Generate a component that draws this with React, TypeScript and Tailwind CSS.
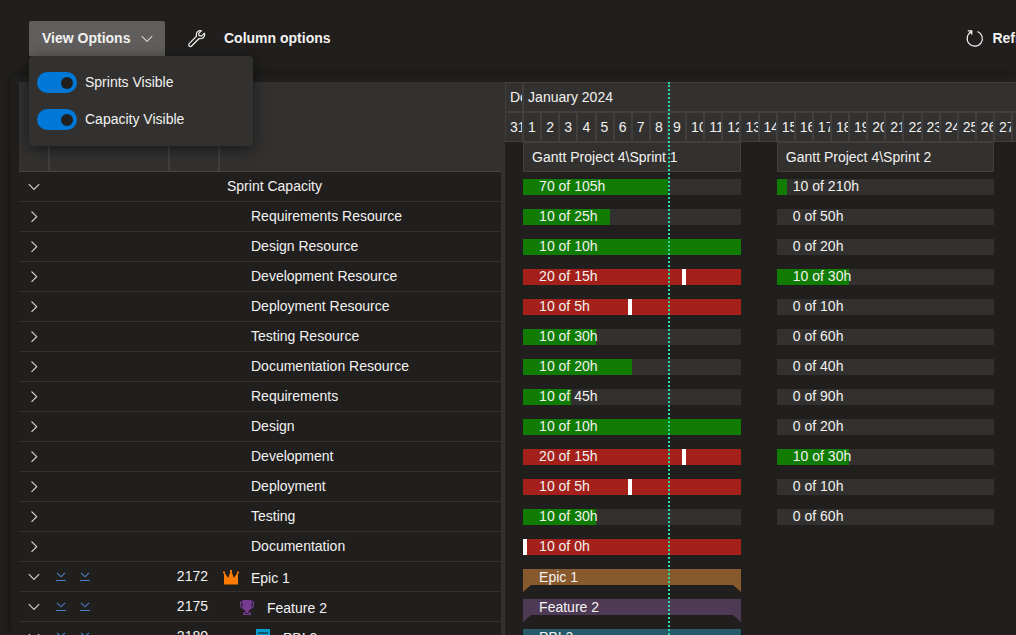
import { useState } from "react";

const DAY = 18.12;
const days = [31, ...Array.from({ length: 28 }, (_, i) => i + 1)];

type Capacity = { used: number; total: number };
type Row = {
  name: string;
  open?: boolean;
  indent: "root" | "resource";
  first: Capacity;
  second?: Capacity;
};

const rows: Row[] = [
  { name: "Sprint Capacity", open: true, indent: "root", first: { used: 70, total: 105 }, second: { used: 10, total: 210 } },
  { name: "Requirements Resource", indent: "resource", first: { used: 10, total: 25 }, second: { used: 0, total: 50 } },
  { name: "Design Resource", indent: "resource", first: { used: 10, total: 10 }, second: { used: 0, total: 20 } },
  { name: "Development Resource", indent: "resource", first: { used: 20, total: 15 }, second: { used: 10, total: 30 } },
  { name: "Deployment Resource", indent: "resource", first: { used: 10, total: 5 }, second: { used: 0, total: 10 } },
  { name: "Testing Resource", indent: "resource", first: { used: 10, total: 30 }, second: { used: 0, total: 60 } },
  { name: "Documentation Resource", indent: "resource", first: { used: 10, total: 20 }, second: { used: 0, total: 40 } },
  { name: "Requirements", indent: "resource", first: { used: 10, total: 45 }, second: { used: 0, total: 90 } },
  { name: "Design", indent: "resource", first: { used: 10, total: 10 }, second: { used: 0, total: 20 } },
  { name: "Development", indent: "resource", first: { used: 20, total: 15 }, second: { used: 10, total: 30 } },
  { name: "Deployment", indent: "resource", first: { used: 10, total: 5 }, second: { used: 0, total: 10 } },
  { name: "Testing", indent: "resource", first: { used: 10, total: 30 }, second: { used: 0, total: 60 } },
  { name: "Documentation", indent: "resource", first: { used: 10, total: 0 } },
];

const items = [
  { id: 2172, name: "Epic 1", icon: <Crown />, pad: "pl-1", bar: "bg-[#87592d]", fill: "fill-[#87592d]" },
  { id: 2175, name: "Feature 2", icon: <Trophy />, pad: "pl-5", bar: "bg-[#4f3a55]", fill: "fill-[#4f3a55]" },
  { id: 2180, name: "PBI 3", icon: <Backlog />, pad: "pl-9", bar: "bg-[#25596b]", fill: "fill-[#25596b]" },
];

function Chevron({ open }: { open?: boolean }) {
  return (
    <svg viewBox="0 0 12 12" className="size-3 fill-none stroke-[#d0cfcd]" strokeWidth="1.2">
      <path d={open ? "M.8 3.2 6 8.4l5.2-5.2" : "M3.500.5l5.200 5.200-5.200 5.200"} />
    </svg>
  );
}

function ExpandAll() {
  return (
    <svg viewBox="0 0 10 10" className="size-[10px] fill-none stroke-[#4a7fc4]" strokeWidth="1.1">
      <path d="M1 .8l4 4 4-4M0 8.500h10" />
    </svg>
  );
}

function Crown() {
  return (
    <svg viewBox="0 0 16 16" className="size-4 fill-[#ff7b00]">
      <path d="M1 14.500V3.500h1.200L5 8 7.400 2h1.200L11 8l2.800-4.500H15v11z" />
      <path d="M0 1.500h2v2H0zM7 0h2v2H7zM14 1.500h2v2h-2z" />
    </svg>
  );
}

function Trophy() {
  return (
    <svg viewBox="0 0 16 16" className="size-4 fill-[#773b93]">
      <path
        fillRule="evenodd"
        d="M3.500 0h9v1.500H15V5c0 2.200-1.300 3.600-3.300 4-.6 1-1.400 1.500-2.200 1.700V12.500H12V15H4v-2.500h2.500v-1.800C5.700 10.500 4.900 10 4.300 9 2.300 8.600 1 7.200 1 5V1.500h2.500zM3.500 2.700H2.200V5c0 1.200.4 2 1.300 2.400zM12.500 2.700v4.700c.9-.4 1.300-1.200 1.300-2.400V2.700zM5.500 13.300v.8h5v-.8z"
      />
    </svg>
  );
}

function Backlog() {
  return (
    <svg viewBox="0 0 16 16" className="size-4 overflow-visible">
      <path className="fill-[#009ccc]" d="M1-1h14v16H1z" />
      <path className="fill-[#12566b]" d="M3 2h10v2H3zM3 7h6v2H3z" />
    </svg>
  );
}

function Wrench() {
  return (
    <svg viewBox="0 0 18 18" className="size-[18px] fill-none stroke-[#f3f2f1]" strokeWidth="1.2" strokeLinejoin="round">
      <path d="M13.500.9C11.200 0 8.400 1.600 8.300 4.400c0 .7.1 1.200.3 1.700L1.200 13.600c-.7.700-.7 1.800 0 2.400.7.700 1.700.7 2.400 0l7.500-7.500c2.700.9 5.500-.9 5.600-3.700 0-.6-.1-1.100-.3-1.600l-2.900 2.900-2.400-.4-.5-2.300z" />
    </svg>
  );
}

function Refresh() {
  return (
    <svg viewBox="0 0 18 18" className="size-[18px] fill-none stroke-[#f3f2f1]" strokeWidth="1.2">
      <path d="M11.500 1.500A7.600 7.600 0 1 1 5.200 1.900M1.800.8H5.800V4.800" />
    </svg>
  );
}

function Toggle({ label }: { label: string }) {
  const [on, setOn] = useState(true);
  return (
    <label className="flex h-[21px] items-start gap-2 leading-5">
      <input
        type="checkbox"
        role="switch"
        checked={on}
        onChange={() => setOn(!on)}
        className="flex h-[21px] w-10 appearance-none items-center justify-start rounded-full bg-[#605e5c] px-1 before:size-3 before:rounded-full before:bg-[#201f1e] checked:justify-end checked:bg-[#0078d7]"
      />
      {label}
    </label>
  );
}

function CapacityBar({ used, total }: Capacity) {
  const over = used > total;
  const percent = over ? (total / used) * 100 : (used / total) * 100;
  return (
    <div className="relative h-4 bg-[#323130]">
      <div
        className={over ? "h-4 bg-[#a4201a]" : "h-4 bg-[#107c04]"}
        style={{ width: over ? "100%" : `${percent}%` }}
      />
      {over && (
        <div className="absolute inset-y-0 flex min-w-1 justify-end" style={{ width: `${percent}%` }}>
          <span className="w-1 bg-white" />
        </div>
      )}
      <span className="absolute top-0 left-4 leading-[14px] whitespace-nowrap">
        {used} of {total}h
      </span>
    </div>
  );
}

function SprintSpan({ start, length, children }: { start: number; length: number; children: React.ReactNode }) {
  return (
    <div className="absolute inset-y-0" style={{ left: start * DAY, width: length * DAY }}>
      {children}
    </div>
  );
}

export default function App() {
  return (
    <div className="flex h-screen flex-col overflow-hidden bg-[#201f1e] font-['Liberation_Sans',Arial,sans-serif] text-sm text-[#f3f2f1]">
      <header className="flex h-[75px] shrink-0 items-start pt-[21px] pl-[29px] font-bold whitespace-nowrap">
        <div className="relative z-20">
          <button className="flex h-[35px] w-[136px] items-center justify-between rounded-t-xs bg-[#605e5c] pr-3 pl-[13px]">
            <span className="pb-[2px]">View Options</span>
            <Chevron open />
          </button>
          <div className="absolute top-full left-0 flex h-[90px] w-56 flex-col gap-4 rounded-sm bg-[#323130] px-2 pt-4 font-normal shadow-[0_3px_14px_rgba(0,0,0,0.5)]">
            <Toggle label="Sprints Visible" />
            <Toggle label="Capacity Visible" />
          </div>
        </div>
        <button className="ml-[23px] flex h-[35px] items-center gap-[18px]">
          <Wrench />
          <span className="pb-[2px]">Column options</span>
        </button>
        <button className="-mr-12 ml-auto flex h-[35px] items-center gap-2">
          <Refresh />
          <span className="pb-[2px]">Refresh all</span>
        </button>
      </header>

      <main className="ml-[11px] flex min-h-0 flex-1 overflow-hidden pt-[7px] pl-2 shadow-[0_0_8px_rgba(0,0,0,0.4)]">
        <section className="w-[482px] shrink-0">
          <div className="flex h-[90px] border-b border-[#484644] bg-[#323130]">
            <div className="w-[31px] border-r-2 border-[#413f3d]" />
            <div className="w-[120px] border-r-2 border-[#413f3d]" />
            <div className="w-[50px] border-r-2 border-[#413f3d]" />
          </div>
          {rows.map((row) => (
            <div key={row.name} className="flex h-[30px] items-center border-b border-[#323130]">
              <button aria-label={`Toggle ${row.name}`} className="flex w-[30px] justify-center">
                <Chevron open={row.open} />
              </button>
              <span className={row.indent === "root" ? "pb-[2px] pl-[178px]" : "pb-[2px] pl-[202px]"}>{row.name}</span>
            </div>
          ))}
          {items.map((item) => (
            <div key={item.id} className="flex h-[30px] items-center border-b border-[#323130]">
              <button aria-label={`Toggle ${item.name}`} className="flex w-[30px] justify-center">
                <Chevron open />
              </button>
              <div className="flex w-[120px] gap-[14px] pl-[7px]">
                <button aria-label="Expand all"><ExpandAll /></button>
                <button aria-label="Expand children"><ExpandAll /></button>
              </div>
              <span className="w-[39px] pb-[2px] text-right">{item.id}</span>
              <span className={`ml-[11px] flex items-center gap-3 pt-[2px] ${item.pad}`}>
                {item.icon}
                {item.name}
              </span>
            </div>
          ))}
        </section>

        <div className="w-1 shrink-0 bg-[#323130]" />

        <section className="relative min-w-0 flex-1 overflow-hidden">
          <div className="flex h-[30px] bg-[#323130] leading-7">
            <div className="shrink-0 overflow-hidden border border-[#413f3d] pl-1 whitespace-nowrap" style={{ width: DAY }}>
              Dec
            </div>
            <div className="flex-1 border border-r-0 border-[#413f3d] pl-1">January 2024</div>
          </div>
          <div className="flex h-[30px] bg-[#323130] leading-7">
            {days.map((day, i) => (
              <div key={i} className="shrink-0 overflow-hidden border border-[#413f3d] pl-1" style={{ width: DAY }}>
                {day}
              </div>
            ))}
          </div>
          <div className="relative h-[30px]">
            {[
              { start: 1, name: "Gantt Project 4\\Sprint 1" },
              { start: 15, name: "Gantt Project 4\\Sprint 2" },
            ].map((sprint) => (
              <SprintSpan key={sprint.name} start={sprint.start} length={12}>
                <div className="h-full border border-[#413f3d] bg-[#323130] pl-2 leading-7">{sprint.name}</div>
              </SprintSpan>
            ))}
          </div>
          {rows.map((row) => (
            <div key={row.name} className="relative h-[30px]">
              <SprintSpan start={1} length={12}>
                <div className="pt-[7px]"><CapacityBar {...row.first} /></div>
              </SprintSpan>
              {row.second && (
                <SprintSpan start={15} length={12}>
                  <div className="pt-[7px]"><CapacityBar {...row.second} /></div>
                </SprintSpan>
              )}
            </div>
          ))}
          {items.map((item) => (
            <div key={item.id} className="relative h-[30px]">
              <SprintSpan start={1} length={12}>
                <div className="pt-[7px]">
                  <div className={`h-4 pl-4 leading-4 ${item.bar}`}>{item.name}</div>
                  <div className="flex justify-between">
                    <svg viewBox="0 0 8 7" className={`h-[7px] w-2 ${item.fill}`}><path d="M0 0h8L0 7z" /></svg>
                    <svg viewBox="0 0 8 7" className={`h-[7px] w-2 ${item.fill}`}><path d="M0 0h8v7z" /></svg>
                  </div>
                </div>
              </SprintSpan>
            </div>
          ))}
          <div className="absolute inset-y-0 border-l-2 border-dotted border-[#2bd9a0]" style={{ left: DAY * 9 }} />
        </section>
      </main>
    </div>
  );
}
